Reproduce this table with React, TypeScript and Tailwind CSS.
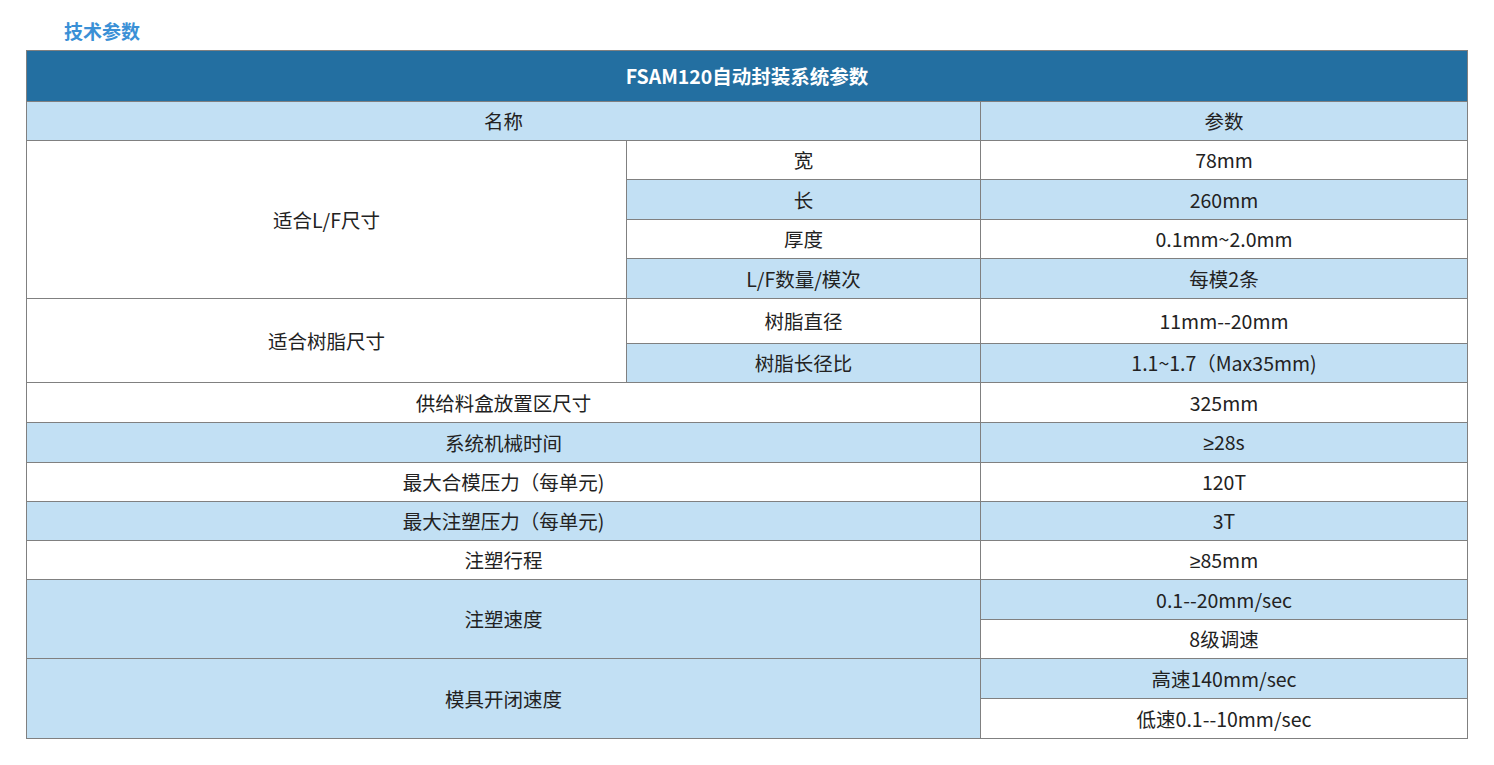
import React from "react";

const B = "bg-[#c2e0f4]";
const W = "bg-white";
const td = "border border-[#808080] text-center align-middle p-0";

const Ge = () => <span style={{ fontFamily: '"Liberation Sans", sans-serif' }}>≥</span>;

export default function App() {
  return (
    <div
      className="w-[1494px] h-[765px] bg-white text-[#222] text-[19.5px]"
      style={{ fontFamily: '"Noto Sans CJK SC", "Microsoft YaHei", sans-serif' }}
    >
      <div className="h-[50px] pt-[17px] pl-[64px]">
        <h2 className="text-[19px] leading-[27px] font-bold text-[#3a90d6]">技术参数</h2>
      </div>
      <div className="pl-[26px]">
        <table className="w-[1441px] border-collapse table-fixed leading-[26px]">
          <colgroup>
            <col className="w-[600px]" />
            <col className="w-[354px]" />
            <col className="w-[487px]" />
          </colgroup>
          <tbody>
            <tr className="h-[51px]">
              <td colSpan={3} className={`${td} bg-[#236fa1] text-white font-bold`}>
                FSAM120自动封装系统参数
              </td>
            </tr>
            <tr className="h-[39px]">
              <td colSpan={2} className={`${td} ${B}`}>名称</td>
              <td className={`${td} ${B}`}>参数</td>
            </tr>
            <tr className="h-[39px]">
              <td rowSpan={4} className={`${td} ${W}`}>适合L/F尺寸</td>
              <td className={`${td} ${W}`}>宽</td>
              <td className={`${td} ${W}`}>78mm</td>
            </tr>
            <tr className="h-[40px]">
              <td className={`${td} ${B}`}>长</td>
              <td className={`${td} ${B}`}>260mm</td>
            </tr>
            <tr className="h-[39px]">
              <td className={`${td} ${W}`}>厚度</td>
              <td className={`${td} ${W}`}>0.1mm~2.0mm</td>
            </tr>
            <tr className="h-[40px]">
              <td className={`${td} ${B}`}>L/F数量/模次</td>
              <td className={`${td} ${B}`}>每模2条</td>
            </tr>
            <tr className="h-[45px]">
              <td rowSpan={2} className={`${td} ${W}`}>适合树脂尺寸</td>
              <td className={`${td} ${W}`}>树脂直径</td>
              <td className={`${td} ${W}`}>11mm--20mm</td>
            </tr>
            <tr className="h-[39px]">
              <td className={`${td} ${B}`}>树脂长径比</td>
              <td className={`${td} ${B}`}>1.1~1.7（Max35mm)</td>
            </tr>
            <tr className="h-[40px]">
              <td colSpan={2} className={`${td} ${W}`}>供给料盒放置区尺寸</td>
              <td className={`${td} ${W}`}>325mm</td>
            </tr>
            <tr className="h-[40px]">
              <td colSpan={2} className={`${td} ${B}`}>系统机械时间</td>
              <td className={`${td} ${B}`}><Ge />28s</td>
            </tr>
            <tr className="h-[39px]">
              <td colSpan={2} className={`${td} ${W}`}>最大合模压力（每单元)</td>
              <td className={`${td} ${W}`}>120T</td>
            </tr>
            <tr className="h-[39px]">
              <td colSpan={2} className={`${td} ${B}`}>最大注塑压力（每单元)</td>
              <td className={`${td} ${B}`}>3T</td>
            </tr>
            <tr className="h-[39px]">
              <td colSpan={2} className={`${td} ${W}`}>注塑行程</td>
              <td className={`${td} ${W}`}><Ge />85mm</td>
            </tr>
            <tr className="h-[40px]">
              <td rowSpan={2} colSpan={2} className={`${td} ${B}`}>注塑速度</td>
              <td className={`${td} ${B}`}>0.1--20mm/sec</td>
            </tr>
            <tr className="h-[39px]">
              <td className={`${td} ${W}`}>8级调速</td>
            </tr>
            <tr className="h-[40px]">
              <td rowSpan={2} colSpan={2} className={`${td} ${B}`}>模具开闭速度</td>
              <td className={`${td} ${B}`}>高速140mm/sec</td>
            </tr>
            <tr className="h-[40px]">
              <td className={`${td} ${W}`}>低速0.1--10mm/sec</td>
            </tr>
          </tbody>
        </table>
      </div>
    </div>
  );
}
